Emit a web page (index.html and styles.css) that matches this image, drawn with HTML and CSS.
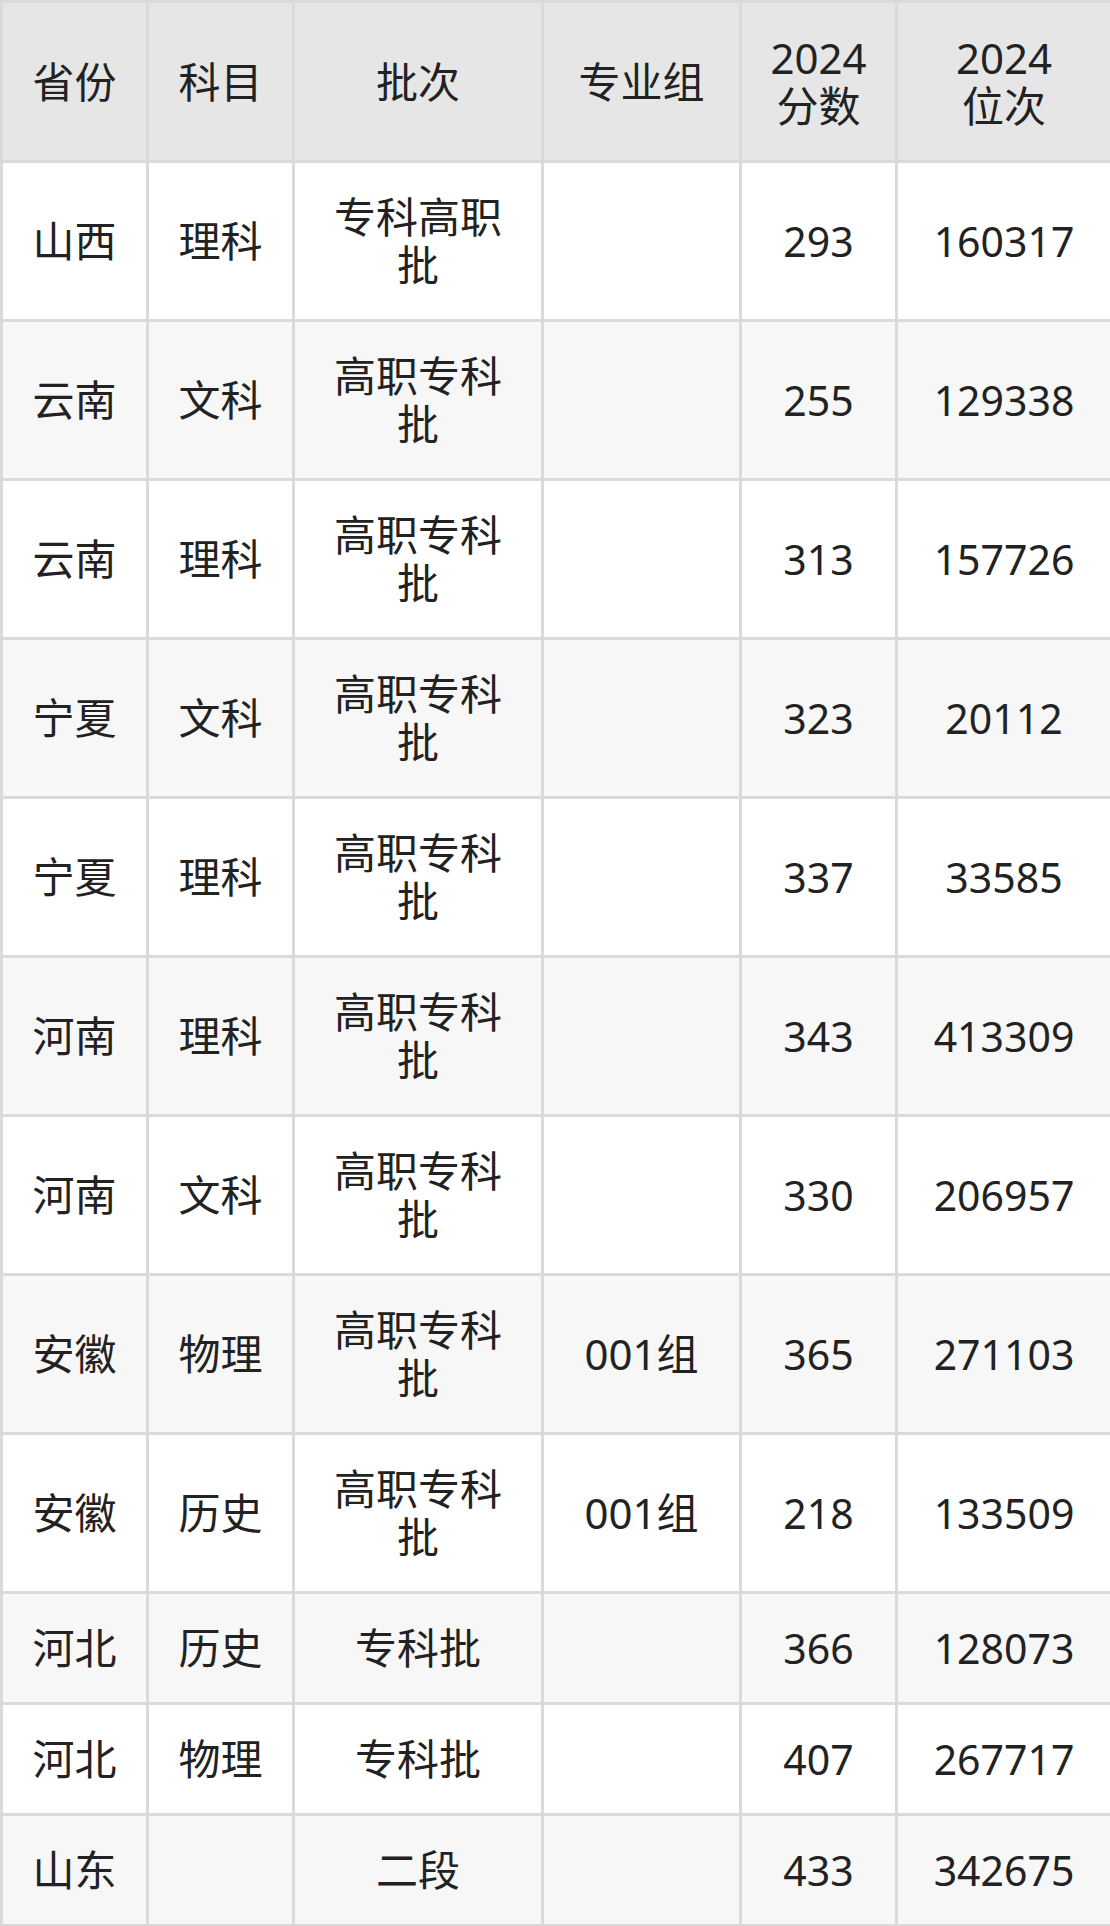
FILE: index.html
```html
<!DOCTYPE html>
<html lang="zh-CN">
<head>
<meta charset="utf-8">
<title>2024 分数位次</title>
<link rel="stylesheet" href="styles.css">
</head>
<body>
<table class="score-table">
  <colgroup>
    <col class="c-prov"><col class="c-subj"><col class="c-batch"><col class="c-group"><col class="c-score"><col class="c-rank">
  </colgroup>
  <thead>
    <tr><th>省份</th><th>科目</th><th>批次</th><th>专业组</th><th>2024<br>分数</th><th>2024<br>位次</th></tr>
  </thead>
  <tbody>
    <tr class="tall"><td>山西</td><td>理科</td><td>专科高职批</td><td></td><td class="num">293</td><td class="num">160317</td></tr>
    <tr class="tall"><td>云南</td><td>文科</td><td>高职专科批</td><td></td><td class="num">255</td><td class="num">129338</td></tr>
    <tr class="tall"><td>云南</td><td>理科</td><td>高职专科批</td><td></td><td class="num">313</td><td class="num">157726</td></tr>
    <tr class="tall"><td>宁夏</td><td>文科</td><td>高职专科批</td><td></td><td class="num">323</td><td class="num">20112</td></tr>
    <tr class="tall"><td>宁夏</td><td>理科</td><td>高职专科批</td><td></td><td class="num">337</td><td class="num">33585</td></tr>
    <tr class="tall"><td>河南</td><td>理科</td><td>高职专科批</td><td></td><td class="num">343</td><td class="num">413309</td></tr>
    <tr class="tall"><td>河南</td><td>文科</td><td>高职专科批</td><td></td><td class="num">330</td><td class="num">206957</td></tr>
    <tr class="tall"><td>安徽</td><td>物理</td><td>高职专科批</td><td>001组</td><td class="num">365</td><td class="num">271103</td></tr>
    <tr class="tall"><td>安徽</td><td>历史</td><td>高职专科批</td><td>001组</td><td class="num">218</td><td class="num">133509</td></tr>
    <tr class="short"><td>河北</td><td>历史</td><td>专科批</td><td></td><td class="num">366</td><td class="num">128073</td></tr>
    <tr class="short"><td>河北</td><td>物理</td><td>专科批</td><td></td><td class="num">407</td><td class="num">267717</td></tr>
    <tr class="short"><td>山东</td><td></td><td>二段</td><td></td><td class="num">433</td><td class="num">342675</td></tr>
  </tbody>
</table>
</body>
</html>
```

FILE: styles.css
```css
html, body {
  margin: 0;
  padding: 0;
  background: #ffffff;
}

.score-table {
  width: 1110px;
  table-layout: fixed;
  border-collapse: collapse;
  font-family: "Noto Sans", "Noto Sans CJK SC", sans-serif;
  font-size: 42px;
  line-height: 48px;
  color: #222222;
}

.c-prov { width: 146px; }
.c-subj { width: 146px; }
.c-batch { width: 249px; }
.c-group { width: 198px; }
.c-score { width: 156px; }
.c-rank { width: 215px; }

.score-table th,
.score-table td {
  border: 3px solid #dadada;
  padding: 0 20px;
  text-align: center;
  vertical-align: middle;
  font-weight: 400;
}

.score-table td.num {
  font-size: 41px;
}

.score-table thead tr {
  height: 160px;
  background: #e6e6e6;
}

.score-table tbody tr:nth-child(odd) { background: #ffffff; }
.score-table tbody tr:nth-child(even) { background: #f7f7f7; }

.score-table tr.tall { height: 159px; }
.score-table tr.short { height: 111px; }
```
